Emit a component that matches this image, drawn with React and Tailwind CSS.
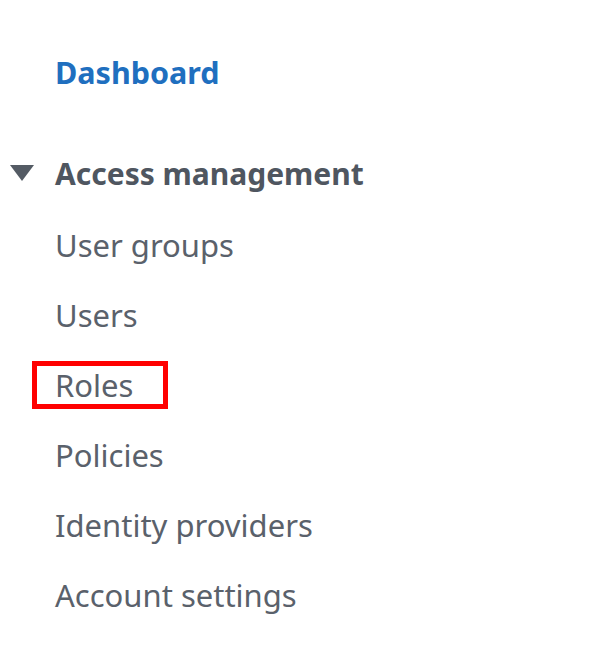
export default function App() {
  const items = ['User groups', 'Users', 'Roles', 'Policies', 'Identity providers', 'Account settings'];
  return (
    <div className="min-h-screen bg-white" style={{ fontFamily: '"Noto Sans", "Open Sans", sans-serif' }}>
      <div className="pt-[52px]">
        <div className="pl-[55px] h-[42px] flex items-center text-[30.5px] font-bold text-[#1f6fbf]">Dashboard</div>
        <div className="mt-[58px] h-[42px] flex items-center gap-[21px] pl-[10px] text-[30px] font-bold text-[#4f5660]">
          <svg width="24" height="16" viewBox="0 0 24 16" className="shrink-0">
            <path d="M0 0 L24 0 L12 16 Z" fill="#545b64" />
          </svg>
          <span>Access management</span>
        </div>
        <div className="mt-[16px] flex flex-col">
          {items.map((item) => (
            <div key={item} className="h-[70px] flex items-center pl-[32px]">
              <span
                className={
                  'h-[48px] inline-flex items-center text-[31px] text-[#5a616b] pl-[18px] pr-[30px] border-[5px] ' +
                  (item === 'Roles' ? 'border-[#ff0000]' : 'border-transparent')
                }
              >
                {item}
              </span>
            </div>
          ))}
        </div>
      </div>
    </div>
  );
}
